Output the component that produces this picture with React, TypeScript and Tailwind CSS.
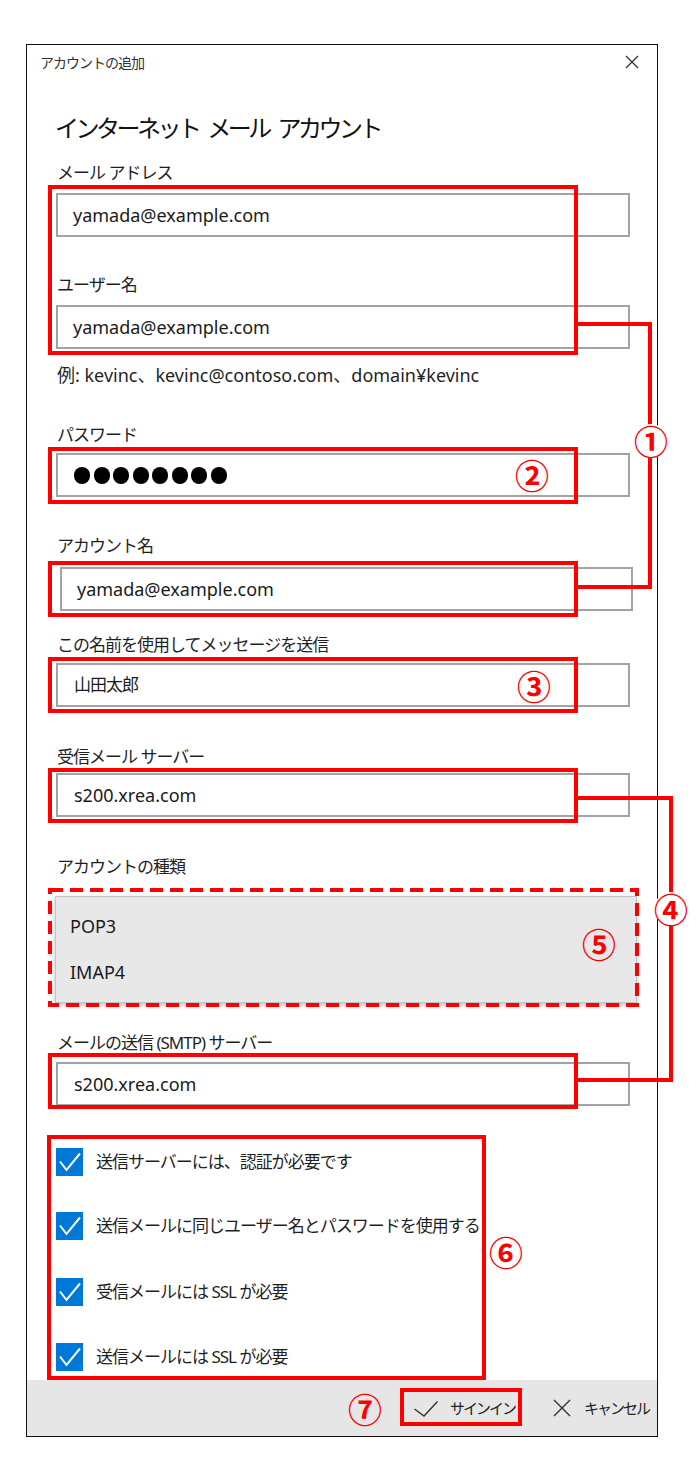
import React from "react";

function Label({ children, className }: { children: React.ReactNode; className: string }) {
  return (
    <div className={`ml-[30px] h-[22px] leading-[22px] text-[17px] tracking-[-1px] text-[#1f1f1f] whitespace-nowrap ${className}`}>
      {children}
    </div>
  );
}

function Field({ children, className }: { children: React.ReactNode; className: string }) {
  return (
    <div className={`h-[44px] border-2 border-[#a3a3a3] flex items-center text-[18px] text-[#1a1a1a] whitespace-nowrap ${className}`}>
      {children}
    </div>
  );
}

function Check({ children, className }: { children: React.ReactNode; className: string }) {
  return (
    <div className={`ml-[29px] h-[28px] flex items-center ${className}`}>
      <div className="w-[27px] h-[28px] bg-[#0078d7] shrink-0">
        <svg width="27" height="28" viewBox="0 0 27 28">
          <polyline points="4,13.5 10.5,22 24,5.5" fill="none" stroke="#ffffff" strokeWidth="2" />
        </svg>
      </div>
      <span className="ml-[13px] text-[17px] tracking-[-1px] text-[#1f1f1f] whitespace-nowrap">{children}</span>
    </div>
  );
}

function Circ({ children, className }: { children: React.ReactNode; className: string }) {
  return (
    <div className={`absolute w-[34px] h-[34px] flex items-center justify-center rounded-full ${className}`}>
      <span className="text-[34px] leading-none font-bold text-[#ff0000] font-['Noto_Sans_CJK_JP',sans-serif]">{children}</span>
    </div>
  );
}

export default function App() {
  return (
    <div className="relative w-[700px] h-[1481px] bg-white overflow-hidden font-['Noto_Sans','Noto_Sans_CJK_JP',sans-serif]">
      <div className="pl-[26px] pt-[44px]">
        <div className="w-[632px] h-[1393px] border border-[#111] flex flex-col bg-white">
          <div className="h-[34px] shrink-0 flex items-center justify-between pl-[13px] pr-[18px]">
            <span className="text-[14px] tracking-[-1px] text-[#333]">アカウントの追加</span>
            <svg width="14" height="14" viewBox="0 0 14 14">
              <path d="M1 1 L13 13 M13 1 L1 13" stroke="#333" strokeWidth="1.3" fill="none" />
            </svg>
          </div>
          <div className="ml-[28px] mt-[34px] h-[30px] leading-[30px] text-[24px] tracking-[-3.5px] [word-spacing:6px] text-[#111] whitespace-nowrap">
            インターネット メール アカウント
          </div>
          <Label className="mt-[19px]">メール アドレス</Label>
          <Field className="ml-[29px] w-[574px] mt-[9px] pl-[15px]">yamada@example.com</Field>
          <Label className="mt-[37px]">ユーザー名</Label>
          <Field className="ml-[29px] w-[574px] mt-[9px] pl-[15px]">yamada@example.com</Field>
          <div className="ml-[30px] mt-[15px] h-[22px] leading-[22px] text-[18px] text-[#1f1f1f] whitespace-nowrap">
            例: kevinc、kevinc@contoso.com、domain¥kevinc
          </div>
          <Label className="mt-[38px]">パスワード</Label>
          <Field className="ml-[29px] w-[574px] mt-[7px] pl-[16px]">
            <div className="flex gap-[3.5px]">
              {Array.from({ length: 8 }).map((_, i) => (
                <div key={i} className="w-[16px] h-[17px] rounded-full bg-black" />
              ))}
            </div>
          </Field>
          <Label className="mt-[38px]">アカウント名</Label>
          <Field className="ml-[33px] w-[573px] mt-[10px] pl-[15px]">yamada@example.com</Field>
          <Label className="mt-[23px]">この名前を使用してメッセージを送信</Label>
          <Field className="ml-[29px] w-[574px] mt-[7px] pl-[16px]">
            <span className="text-[17px] tracking-[-1px]">山田太郎</span>
          </Field>
          <Label className="mt-[39px]">受信メール サーバー</Label>
          <Field className="ml-[29px] w-[574px] mt-[5px] pl-[16px]">s200.xrea.com</Field>
          <Label className="mt-[39px]">アカウントの種類</Label>
          <div className="ml-[28px] mt-[18px] w-[582px] h-[107px] shrink-0 bg-[#e8e8e8] border border-[#c4c4c4] shadow-[0_2px_5px_rgba(0,0,0,0.25)] flex flex-col pl-[14px] text-[18px] text-[#1a1a1a]">
            <div className="mt-[17px] h-[24px] leading-[24px]">POP3</div>
            <div className="mt-[22px] h-[24px] leading-[24px]">IMAP4</div>
          </div>
          <Label className="mt-[29px]">メールの送信 (SMTP) サーバー</Label>
          <Field className="ml-[29px] w-[574px] mt-[8px] pl-[16px]">s200.xrea.com</Field>
          <Check className="mt-[42px]">送信サーバーには、認証が必要です</Check>
          <Check className="mt-[36px]">送信メールに同じユーザー名とパスワードを使用する</Check>
          <Check className="mt-[38px]">受信メールには SSL が必要</Check>
          <Check className="mt-[37px]">送信メールには SSL が必要</Check>
          <div className="flex-1 mt-[9px] bg-[#e6e6e6] flex items-center justify-end pr-[8px] text-[15px] tracking-[-2px] text-[#222]">
            <svg width="24" height="16" viewBox="0 0 24 16" className="mt-[1px]">
              <polyline points="0.5,8 10,15 23.5,0.5" fill="none" stroke="#333" strokeWidth="1.4" />
            </svg>
            <span className="ml-[12px]">サインイン</span>
            <svg width="18" height="18" viewBox="0 0 18 18" className="ml-[38px]">
              <path d="M1 1 L17 17 M17 1 L1 17" stroke="#333" strokeWidth="1.4" fill="none" />
            </svg>
            <span className="ml-[13px]">キャンセル</span>
          </div>
        </div>
      </div>

      {/* annotations */}
      <div className="absolute left-[48px] top-[185px] w-[530px] h-[170px] border-4 border-[#ff0000]" />
      <div className="absolute left-[48px] top-[447px] w-[530px] h-[57px] border-4 border-[#ff0000]" />
      <div className="absolute left-[48px] top-[561px] w-[530px] h-[56px] border-4 border-[#ff0000]" />
      <div className="absolute left-[48px] top-[657px] w-[530px] h-[56px] border-4 border-[#ff0000]" />
      <div className="absolute left-[48px] top-[768px] w-[530px] h-[55px] border-4 border-[#ff0000]" />
      <div className="absolute left-[48px] top-[1053px] w-[530px] h-[56px] border-4 border-[#ff0000]" />
      <div className="absolute left-[47px] top-[1135px] w-[439px] h-[245px] border-4 border-[#ff0000]" />
      <div className="absolute left-[400px] top-[1388px] w-[122px] h-[38px] border-4 border-[#ff0000]" />
      <svg className="absolute left-[48px] top-[888px]" width="591" height="119" viewBox="0 0 591 119">
        <rect x="2" y="2" width="587" height="115" fill="none" stroke="#ff0000" strokeWidth="4" strokeDasharray="13 7" />
      </svg>

      {/* connector 1 */}
      <div className="absolute left-[578px] top-[322px] w-[74px] h-[4px] bg-[#ff0000]" />
      <div className="absolute left-[648px] top-[322px] w-[4px] h-[267px] bg-[#ff0000]" />
      <div className="absolute left-[578px] top-[585px] w-[74px] h-[4px] bg-[#ff0000]" />
      {/* connector 4 */}
      <div className="absolute left-[578px] top-[796px] w-[95px] h-[4px] bg-[#ff0000]" />
      <div className="absolute left-[669px] top-[796px] w-[4px] h-[286px] bg-[#ff0000]" />
      <div className="absolute left-[578px] top-[1078px] w-[95px] h-[4px] bg-[#ff0000]" />

      <Circ className="left-[634px] top-[424px] bg-white">①</Circ>
      <Circ className="left-[515px] top-[458px]">②</Circ>
      <Circ className="left-[517px] top-[669px]">③</Circ>
      <Circ className="left-[654px] top-[892px] bg-white">④</Circ>
      <Circ className="left-[582px] top-[927px]">⑤</Circ>
      <Circ className="left-[489px] top-[1235px]">⑥</Circ>
      <Circ className="left-[348px] top-[1392px]">⑦</Circ>
    </div>
  );
}
